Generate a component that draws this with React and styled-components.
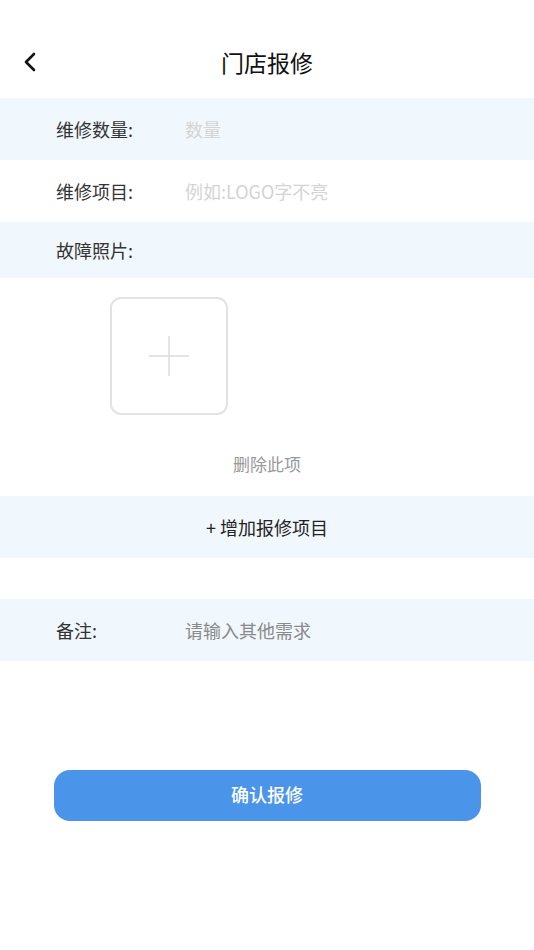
import React from 'react';
import styled, { createGlobalStyle } from 'styled-components';

const GlobalStyle = createGlobalStyle`
  html, body {
    margin: 0;
    padding: 0;
    background: #fff;
    font-family: "Noto Sans CJK SC", "Noto Sans", sans-serif;
  }
  * { box-sizing: border-box; }
`;

const Page = styled.div`
  width: 534px;
  min-height: 950px;
  background: #fff;
  display: flex;
  flex-direction: column;
`;

const Header = styled.div`
  height: 98px;
  padding-top: 26px;
  display: grid;
  grid-template-columns: 60px 1fr 60px;
  align-items: center;
`;

const BackButton = styled.button`
  border: none;
  background: none;
  padding: 0 0 0 22px;
  height: 72px;
  display: flex;
  align-items: center;
  cursor: pointer;
`;

const Title = styled.h1`
  margin: 0;
  text-align: center;
  font-size: 23px;
  font-weight: 400;
  color: #111;
`;

const Row = styled.div`
  height: ${p => p.$h || 62}px;
  background: ${p => (p.$tint ? '#f0f7fd' : '#fff')};
  display: flex;
  align-items: center;
  padding-left: 56px;
`;

const Label = styled.span`
  width: 129px;
  font-size: 18px;
  color: #333;
`;

const Field = styled.input`
  border: none;
  outline: none;
  background: transparent;
  font-family: inherit;
  font-size: 18px;
  padding: 0;
  flex: 1;
  color: #333;
  &::placeholder {
    color: ${p => p.$ph || '#d4d4d4'};
  }
`;

const PhotoSection = styled.div`
  height: 218px;
  padding-top: 19px;
  display: flex;
  flex-direction: column;
`;

const UploadBox = styled.div`
  margin-left: 110px;
  width: 118px;
  height: 118px;
  border: 2px solid #e2e2e2;
  border-radius: 11px;
  display: flex;
  align-items: center;
  justify-content: center;
`;

const DeleteLink = styled.div`
  margin-top: 37px;
  text-align: center;
  font-size: 17px;
  line-height: 24px;
  color: #999;
`;

const AddRow = styled(Row)`
  padding-left: 0;
  justify-content: center;
  font-size: 18px;
  color: #222;
`;

const Spacer = styled.div`
  height: ${p => p.$h}px;
`;

const SubmitButton = styled.button`
  margin: 0 auto;
  width: 427px;
  height: 51px;
  padding: 0 0 3px;
  border: none;
  border-radius: 16px;
  background: #4a94ea;
  color: #fff;
  font-family: inherit;
  font-size: 18px;
  font-weight: 500;
  cursor: pointer;
`;

const App = () => (
  <Page>
    <GlobalStyle />
    <Header>
      <BackButton>
        <svg width="16" height="22" viewBox="0 0 16 22">
          <path d="M12 3 L4 11 L12 19" fill="none" stroke="#111" strokeWidth="2.6" strokeLinecap="round" strokeLinejoin="round" />
        </svg>
      </BackButton>
      <Title>门店报修</Title>
      <div />
    </Header>
    <Row $tint>
      <Label>维修数量:</Label>
      <Field placeholder="数量" />
    </Row>
    <Row>
      <Label>维修项目:</Label>
      <Field placeholder="例如:LOGO字不亮" />
    </Row>
    <Row $tint $h={56}>
      <Label>故障照片:</Label>
    </Row>
    <PhotoSection>
      <UploadBox>
        <svg width="44" height="44" viewBox="0 0 44 44">
          <path d="M22 2 V42 M2 22 H42" stroke="#dcdcdc" strokeWidth="1.5" />
        </svg>
      </UploadBox>
      <DeleteLink>删除此项</DeleteLink>
    </PhotoSection>
    <AddRow $tint>+ 增加报修项目</AddRow>
    <Spacer $h={41} />
    <Row $tint>
      <Label>备注:</Label>
      <Field placeholder="请输入其他需求" $ph="#8a8a8a" />
    </Row>
    <Spacer $h={109} />
    <SubmitButton>确认报修</SubmitButton>
  </Page>
);

export default App;
